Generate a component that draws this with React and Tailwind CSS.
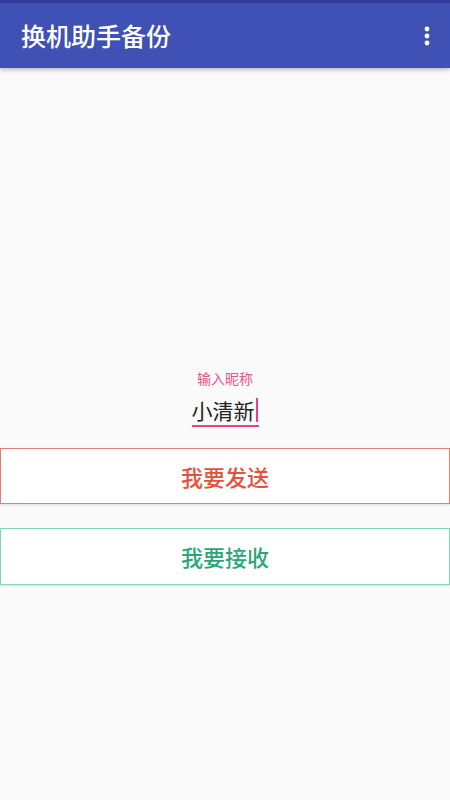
import React from "react";

export default function App() {
  const font = { fontFamily: '"Noto Sans CJK SC", "Noto Sans", sans-serif' };
  return (
    <div className="w-[450px] h-[800px] bg-[#fafafa] flex flex-col overflow-hidden" style={font}>
      <div className="h-[3px] bg-[#303f9f]" />
      <div className="h-[65px] bg-[#3f51b5] flex items-center justify-between pl-[21px] pr-[20px] shadow-[0_2px_4px_rgba(0,0,0,0.25)] relative z-10">
        <span className="text-white text-[25px] font-medium leading-none">换机助手备份</span>
        <svg width="6" height="20" viewBox="0 0 6 20">
          <circle cx="3" cy="3" r="2.4" fill="white" />
          <circle cx="3" cy="10" r="2.4" fill="white" />
          <circle cx="3" cy="17" r="2.4" fill="white" />
        </svg>
      </div>
      <div className="h-[303px]" />
      <div className="flex flex-col items-center">
        <span className="text-[14px] leading-none text-[#e0578a]">输入昵称</span>
        <div className="mt-[12px] flex items-center border-b-2 border-[#e8437f] pb-[2px] w-[67px]">
          <span className="text-[21px] leading-[26px] text-[#222] whitespace-nowrap">小清新</span>
          <span className="w-[2px] h-[24px] bg-[#e8437f] ml-[1px] shrink-0" />
        </div>
      </div>
      <div className="mt-[21px] h-[56px] bg-white border border-[#e57f74] flex items-center justify-center shadow-[0_1px_2px_rgba(0,0,0,0.12)]">
        <span className="text-[22px] font-medium text-[#e8503a]">我要发送</span>
      </div>
      <div className="mt-[24px] h-[57px] bg-white border border-[#86d6b4] flex items-center justify-center shadow-[0_1px_2px_rgba(0,0,0,0.12)]">
        <span className="text-[22px] font-medium text-[#2aa779]">我要接收</span>
      </div>
    </div>
  );
}
